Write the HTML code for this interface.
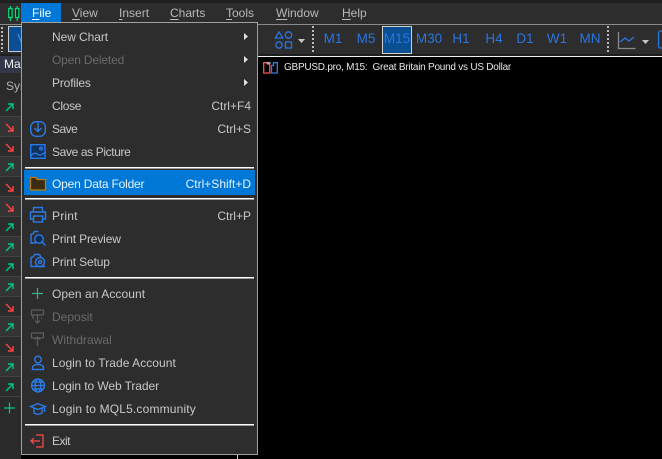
<!DOCTYPE html>
<html><head><meta charset="utf-8">
<style>
html,body{margin:0;padding:0;background:#000}
body{width:662px;height:459px;position:relative;overflow:hidden;font-family:"Liberation Sans",sans-serif;font-size:12px;color:#c8c8c8}
.a{position:absolute}
.t{position:absolute;white-space:nowrap;line-height:16px}
.mb{top:5px;color:#b8b8b8}
.mb u{text-underline-offset:2px}
.mi{left:52px;margin-top:-7px;color:#c8c8c8}
.d{color:#6a6a6a!important}
.sc{right:411px;margin-top:-7px;color:#c8c8c8}
.sep{position:absolute;left:25px;width:229px;height:2px;background:linear-gradient(#fff 0 1px,#9a9a9a 1px)}
.tf{top:31px;width:30px;text-align:center;color:#2a74e0;font-size:13.5px}
.row{position:absolute;left:0;width:21px;height:19px;border-bottom:1px solid #424242}
svg{position:absolute;overflow:visible}
</style></head><body>
<!-- top -->
<div class="a" style="left:0;top:0;width:662px;height:3px;background:#1e1e1e"></div>
<div class="a" style="left:0;top:3px;width:662px;height:21px;background:#2d2d2d"></div>
<div class="a" style="left:0;top:24px;width:662px;height:1px;background:#8a8a8a"></div>
<div class="a" style="left:0;top:25px;width:662px;height:29px;background:#2d2d2d"></div>
<div class="a" style="left:0;top:54px;width:662px;height:2px;background:#1e1e1e"></div>
<div class="a" style="left:258px;top:56px;width:404px;height:1px;background:#f0f0f0"></div>
<!-- logo -->
<svg style="left:8px;top:5px" width="13" height="16" fill="none" stroke="#00e07a" stroke-width="1.2"><path d="M2.400 1v15M9.200 1v15"/><rect x=".7" y="3.500" width="3.400" height="9" fill="#0e2a20"/><rect x="7.500" y="3.500" width="3.400" height="9" fill="#0e2a20"/></svg>
<!-- menu bar -->
<div class="a" style="left:21px;top:3px;width:40px;height:19px;background:#0078d7"></div>
<div class="t mb" style="left:32px;color:#fff"><u>F</u>ile</div>
<div class="t mb" style="left:72px"><u>V</u>iew</div>
<div class="t mb" style="left:119px"><u>I</u>nsert</div>
<div class="t mb" style="left:170px"><u>C</u>harts</div>
<div class="t mb" style="left:226px"><u>T</u>ools</div>
<div class="t mb" style="left:276px"><u>W</u>indow</div>
<div class="t mb" style="left:342px"><u>H</u>elp</div>
<!-- toolbar left -->
<div class="a" style="left:1px;top:27px;width:2px;height:25px;background:repeating-linear-gradient(#bbb 0 2px,transparent 2px 4px)"></div>
<div class="a" style="left:8px;top:26px;width:14px;height:26px;background:#0a4f91;border:1px solid #ccc;box-sizing:border-box"></div>
<svg style="left:17px;top:33px" width="6" height="12" fill="none" stroke="#3c8ad8" stroke-width="1.3"><path d="M1 1l4 10"/></svg>
<!-- sidebar -->
<div class="a" style="left:0;top:56px;width:21px;height:403px;background:#2a2a2a"></div>
<div class="a" style="left:0;top:56px;width:21px;height:17px;background:#33374a"></div>
<div class="t" style="left:4px;top:56px;color:#f0f0f0;font-size:12px">Ma</div>
<div class="t" style="left:6px;top:78px;color:#b4b4b4">Sym</div>
<div class="row" style="top:97px;background:#2c2c2c"></div>
<div class="row" style="top:117px;background:#343434"></div>
<div class="row" style="top:137px;background:#2c2c2c"></div>
<div class="row" style="top:157px;background:#343434"></div>
<div class="row" style="top:177px;background:#2c2c2c"></div>
<div class="row" style="top:197px;background:#343434"></div>
<div class="row" style="top:217px;background:#2c2c2c"></div>
<div class="row" style="top:237px;background:#343434"></div>
<div class="row" style="top:257px;background:#2c2c2c"></div>
<div class="row" style="top:277px;background:#343434"></div>
<div class="row" style="top:297px;background:#2c2c2c"></div>
<div class="row" style="top:317px;background:#343434"></div>
<div class="row" style="top:337px;background:#2c2c2c"></div>
<div class="row" style="top:357px;background:#343434"></div>
<div class="row" style="top:377px;background:#2c2c2c"></div>
<svg style="left:0;top:0" width="21" height="459" fill="none" stroke-width="1.4">
<g stroke="#00c880">
<path d="M6 111l7-7M8 104h5v5"/>
<path d="M6 171l7-7M8 164h5v5"/>
<path d="M6 231l7-7M8 224h5v5"/>
<path d="M6 251l7-7M8 244h5v5"/>
<path d="M6 271l7-7M8 264h5v5"/>
<path d="M6 291l7-7M8 284h5v5"/>
<path d="M6 331l7-7M8 324h5v5"/>
<path d="M6 371l7-7M8 364h5v5"/>
<path d="M6 391l7-7M8 384h5v5"/>
<path d="M4 408h11M9.500 402.500v11" stroke-width="1.200"/>
</g>
<g stroke="#ff4444">
<path d="M6 124l7 7M8 131h5v-5"/>
<path d="M6 144l7 7M8 151h5v-5"/>
<path d="M6 184l7 7M8 191h5v-5"/>
<path d="M6 204l7 7M8 211h5v-5"/>
<path d="M6 304l7 7M8 311h5v-5"/>
<path d="M6 344l7 7M8 351h5v-5"/>
</g>
</svg>
<!-- toolbar right -->
<svg style="left:270px;top:24px" width="60" height="30" fill="none" stroke="#2a74e0" stroke-width="1.3">
<path d="M9 8l3.800 6h-7.600z"/><circle cx="18.500" cy="11" r="3.200"/><circle cx="9" cy="21" r="3.200"/><rect x="15.500" y="18" width="6" height="6"/>
<path d="M28 15h7l-3.500 4z" fill="#c8c8c8" stroke="none"/>
</svg>
<div class="a" style="left:312px;top:26px;width:2px;height:28px;background:repeating-linear-gradient(#bbb 0 2px,transparent 2px 4px)"></div>
<div class="a" style="left:607px;top:26px;width:2px;height:28px;background:repeating-linear-gradient(#bbb 0 2px,transparent 2px 4px)"></div>
<div class="a" style="left:382px;top:26px;width:30px;height:28px;background:#0a4f91;border:1px solid #d0d0d0;box-sizing:border-box"></div>
<div class="t tf" style="left:318px">M1</div>
<div class="t tf" style="left:351px">M5</div>
<div class="t tf" style="left:382px">M15</div>
<div class="t tf" style="left:414px">M30</div>
<div class="t tf" style="left:446px">H1</div>
<div class="t tf" style="left:479px">H4</div>
<div class="t tf" style="left:510px">D1</div>
<div class="t tf" style="left:542px">W1</div>
<div class="t tf" style="left:575px">MN</div>
<svg style="left:617px;top:31px" width="45" height="20" fill="none" stroke-width="1.3">
<path d="M1.500 1v16.500h17" stroke="#8a8a8a"/><path d="M3 11l5-4 4 3 5-4" stroke="#2a74e0"/>
<path d="M25 9h7l-3.500 4z" fill="#c8c8c8"/>
<rect x="41.500" y="0" width="8" height="17" rx="2" stroke="#2a74e0"/>
</svg>
<!-- chart label -->
<svg style="left:263px;top:62px" width="16" height="12" fill="none" stroke-width="1.3">
<path d="M.7.700h3l1 1.500h2v8.800H.7z" stroke="#ff4d4d"/><rect x="3.500" y="0" width="4" height="2" fill="#aaa"/><path d="M8.500 3.500h2V.7h3.800v10.300H8.500z" stroke="#2f80e0"/>
</svg>
<div class="t" style="left:284px;top:60px;color:#e6e6e6;font-size:10px;letter-spacing:-.24px">GBPUSD.pro, M15:&nbsp; Great Britain Pound vs US Dollar</div>
<!-- menu -->
<div class="a" style="left:21px;top:22px;width:237px;height:433px;background:#2d2d2d;border:1px solid #a0a0a0;box-sizing:border-box"></div>
<div class="a" style="left:237px;top:455px;width:1px;height:4px;background:#d0d0d0"></div>
<div class="a" style="left:24px;top:170px;width:231px;height:25px;background:#0078d7"></div>
<div class="sep" style="top:167px"></div>
<div class="sep" style="top:198px"></div>
<div class="sep" style="top:277px"></div>
<div class="sep" style="top:424px"></div>
<div class="t mi" style="top:36px;letter-spacing:-.07px">New Chart</div>
<div class="t mi d" style="top:59px;letter-spacing:-.16px">Open Deleted</div>
<div class="t mi" style="top:82px;letter-spacing:-.16px">Profiles</div>
<div class="t mi" style="top:105px;letter-spacing:-.3px">Close</div>
<div class="t mi" style="top:128px;letter-spacing:-.5px">Save</div>
<div class="t mi" style="top:151px;letter-spacing:-.37px">Save as Picture</div>
<div class="t mi" style="top:183px;color:#e8f2fb;letter-spacing:-.19px">Open Data Folder</div>
<div class="t mi" style="top:215px;letter-spacing:.2px">Print</div>
<div class="t mi" style="top:238px;letter-spacing:-.15px">Print Preview</div>
<div class="t mi" style="top:261px;letter-spacing:-.14px">Print Setup</div>
<div class="t mi" style="top:293px;letter-spacing:.07px">Open an Account</div>
<div class="t mi d" style="top:316px">Deposit</div>
<div class="t mi d" style="top:339px;letter-spacing:.05px">Withdrawal</div>
<div class="t mi" style="top:362px;letter-spacing:.05px">Login to Trade Account</div>
<div class="t mi" style="top:385px;letter-spacing:-.08px">Login to Web Trader</div>
<div class="t mi" style="top:408px;letter-spacing:.17px">Login to MQL5.community</div>
<div class="t mi" style="top:440px;letter-spacing:-.5px">Exit</div>
<div class="t sc" style="top:105px">Ctrl+F4</div>
<div class="t sc" style="top:128px">Ctrl+S</div>
<div class="t sc" style="top:183px;color:#e8f2fb">Ctrl+Shift+D</div>
<div class="t sc" style="top:215px">Ctrl+P</div>
<!-- submenu arrows -->
<svg style="left:0;top:0" width="258" height="459">
<path d="M244 33l4 3.500-4 3.500zM244 56l4 3.500-4 3.500zM244 79l4 3.500-4 3.500z" fill="#e0e0e0"/>
<g fill="none" stroke="#2a7ae6" stroke-width="1.4">
<!-- save -->
<rect x="30.700" y="121.700" width="14.600" height="14.600" rx="5.500"/><path d="M38 122v9M34.500 128l3.500 3.500 3.500-3.500"/>
<!-- picture -->
<rect x="30.700" y="144.700" width="14.300" height="13.600" fill="#10335e"/><path d="M31 156c3-4 5-3 7-1.500s4 0 7-2"/><circle cx="41" cy="148.500" r="1.300"/>
<!-- print -->
<path d="M33.500 212v-4.500h9v4.500M33.500 219h-3v-7h15v7h-3"/><rect x="33.500" y="216" width="9" height="6"/>
<!-- preview -->
<path d="M31 234h2l1.500-2.500h4M31 234v9h5"/><circle cx="39" cy="239" r="4.200" fill="#0d2c50"/><path d="M42 242l3.500 3.500"/>
<!-- setup -->
<path d="M31 257h2l1.500-2.500h5l1.500 2.500M31 257v9.500h14"/><circle cx="40" cy="262" r="4.500"/><circle cx="40" cy="262" r="1.500"/>
<!-- account -->
<circle cx="38" cy="359.500" r="3.300"/><path d="M32.500 369.500v-1.500c0-2 2-3.500 5.500-3.500s5.500 1.500 5.500 3.500v1.500z"/>
<!-- web -->
<circle cx="38" cy="385.500" r="6.400"/><ellipse cx="38" cy="385.500" rx="2.800" ry="6.400"/><path d="M31.500 385.500h13M32.500 382h11M32.500 389h11"/>
<!-- mql -->
<path d="M30.500 406.500l7.500-2.800 7.500 2.800-7.500 3zM34 408.500v4.500c2.500 1.500 5.500 1.500 8 0v-4.500M44.500 407v5"/>
</g>
<!-- folder -->
<path d="M30.500 177.500h5.500l1 2h8.500v10.500h-15z" fill="#3a2c10" stroke="#c07a10" stroke-width="1.3"/>
<!-- plus -->
<path d="M32 293.500h11M37.500 288v11" stroke="#3fae85" stroke-width="1.200" fill="none"/>
<g fill="none" stroke="#5e5e5e" stroke-width="1.200">
<path d="M31.500 310h12v5M31.500 310v5h12M34 318h-1v-3M42 318h-1M37.500 314v9M35 320.500l2.500 2.500 2.500-2.500"/>
<path d="M31.500 333h12v5M31.500 333v5h12M37.500 346v-9M35 339.500l2.500-2.500 2.500 2.500"/>
</g>
<!-- exit -->
<g fill="none" stroke="#ff4d4d" stroke-width="1.2"><path d="M36 435h7v12h-7M31 441h9M34 438l-3 3 3 3"/></g>
</svg>
</body></html>
